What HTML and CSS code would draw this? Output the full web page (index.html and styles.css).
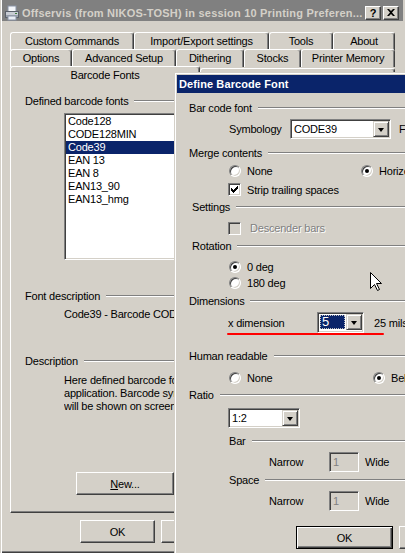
FILE: index.html
```html
<!DOCTYPE html>
<html>
<head>
<meta charset="utf-8">
<title>Printing Preferences</title>
<link rel="stylesheet" href="styles.css">
</head>
<body>
<div class="win">
  <div class="titlebar">
    <svg class="ticon" width="16" height="16" viewBox="0 0 16 16">
      <rect x="4" y="1" width="8" height="6" fill="#f4f6fa" stroke="#8a94a6" stroke-width="1"/>
      <rect x="1.5" y="6.5" width="13" height="6" fill="#c8ccd4" stroke="#5a606a" stroke-width="1"/>
      <rect x="2" y="10" width="12" height="2" fill="#9aa0aa"/>
      <rect x="4" y="11" width="8" height="4" fill="#e8ecf4" stroke="#8a94a6" stroke-width="1"/>
      <rect x="11" y="8" width="2" height="1" fill="#3a7a3a"/>
    </svg>
    <span class="ttext">Offservis (from NIKOS-TOSH) in session 10 Printing Preferen...</span>
    <span class="tbtn q">?</span>
    <span class="tbtn">
      <svg width="8" height="7" viewBox="0 0 8 7"><path d="M0 0h2l2 2 2-2h2L5 3.5 8 7H6L4 5 2 7H0l3-3.5z" fill="#000"/></svg>
    </span>
  </div>

  <div class="tabs">
    <div class="trow r1">
      <div class="tab">Custom Commands</div>
      <div class="tab">Import/Export settings</div>
      <div class="tab">Tools</div>
      <div class="tab">About</div>
    </div>
    <div class="trow r2">
      <div class="tab">Options</div>
      <div class="tab">Advanced Setup</div>
      <div class="tab">Dithering</div>
      <div class="tab">Stocks</div>
      <div class="tab">Printer Memory</div>
    </div>
    <div class="r3">
      <div class="tab sel">Barcode Fonts</div>
      <div class="tab other"></div>
    </div>
  </div>

  <div class="panel">
    <div class="hdr p-h1"><span>Defined barcode fonts</span><span class="ln"></span></div>
    <div class="listbox">
      <div class="item">Code128</div>
      <div class="item">CODE128MIN</div>
      <div class="item selitem">Code39</div>
      <div class="item">EAN 13</div>
      <div class="item">EAN 8</div>
      <div class="item">EAN13_90</div>
      <div class="item">EAN13_hmg</div>
    </div>
    <div class="hdr p-h2"><span>Font description</span><span class="ln"></span></div>
    <div class="ptext p-fd">Code39 - Barcode CODE39</div>
    <div class="hdr p-h3"><span>Description</span><span class="ln"></span></div>
    <div class="ptext p-desc">Here defined barcode fonts can be used in any<br>application. Barcode symbology and parameters<br>will be shown on screen in font description.</div>
    <div class="btn p-new"><u>N</u>ew...</div>
  </div>

  <div class="btns">
    <div class="btn">OK</div>
    <div class="btn">Cancel</div>
  </div>
</div>

<div class="dlg">
  <div class="dtitle">Define Barcode Font</div>
  <div class="dbody">
    <div class="hdr d-a"><span>Bar code font</span><span class="ln"></span></div>
    <div class="row d-b">
      <span class="lbl l-sym">Symbology</span>
      <div class="combo c-sym"><span class="val">CODE39</span><span class="dd"><i></i></span></div>
      <span class="after">Font</span>
    </div>
    <div class="hdr d-c"><span>Merge contents</span><span class="ln"></span></div>
    <div class="row d-d">
      <span class="opt o-merge"><span class="radio"></span>None</span>
      <span class="opt"><span class="radio on"></span>Horizontal</span>
    </div>
    <div class="row d-e">
      <span class="opt"><span class="check"><svg width="7" height="7" viewBox="0 0 7 7"><path d="M0 2h1v1h1v1h1V3h1V2h1V1h1V0h1v3H6v1H5v1H4v1H3v1H2V6H1V5H0z" fill="#000"/></svg></span>Strip trailing spaces</span>
    </div>
    <div class="hdr d-f ind"><span>Settings</span><span class="ln"></span></div>
    <div class="row d-g">
      <span class="opt dis"><span class="check off"></span>Descender bars</span>
    </div>
    <div class="hdr d-h ind"><span>Rotation</span><span class="ln"></span></div>
    <div class="row d-i"><span class="opt"><span class="radio on"></span>0 deg</span></div>
    <div class="row d-j"><span class="opt"><span class="radio"></span>180 deg</span></div>
    <div class="hdr d-k"><span>Dimensions</span><span class="ln"></span></div>
    <div class="row d-l">
      <span class="lbl l-xd">x dimension</span>
      <div class="combo c-xd"><span class="val"><span class="hl">5</span></span><span class="dd"><i></i></span></div>
      <span class="after a-mils">25 mils</span>
    </div>
    <div class="redline"></div>
    <div class="hdr d-m"><span>Human readable</span><span class="ln"></span></div>
    <div class="row d-n">
      <span class="opt o-hr"><span class="radio"></span>None</span>
      <span class="opt"><span class="radio on"></span>Below</span>
    </div>
    <div class="hdr d-o"><span>Ratio</span><span class="ln"></span></div>
    <div class="row d-p">
      <div class="combo c-ratio"><span class="val">1:2</span><span class="dd"><i></i></span></div>
    </div>
    <div class="hdr d-q sub"><span>Bar</span><span class="ln"></span></div>
    <div class="row d-r">
      <span class="lbl l-nar">Narrow</span>
      <span class="tbox">1</span>
      <span class="after a-wide">Wide</span>
    </div>
    <div class="hdr d-s sub"><span>Space</span><span class="ln"></span></div>
    <div class="row d-t">
      <span class="lbl l-nar">Narrow</span>
      <span class="tbox">1</span>
      <span class="after a-wide">Wide</span>
    </div>
    <div class="row d-u">
      <div class="btn def">OK</div>
      <div class="btn def2">Cancel</div>
    </div>
  </div>
  <svg class="cursor" width="13" height="20" viewBox="0 0 13 20">
    <path d="M0.5 0.5 L0.5 16.5 L4.5 12.5 L7.5 18.5 L9.5 17.5 L6.5 11.5 L11.5 11.5 Z" fill="#fff" stroke="#000" stroke-width="1"/>
  </svg>
</div>
</body>
</html>
```

FILE: styles.css
```css
* { box-sizing: border-box; }
html, body { margin: 0; padding: 0; }
body {
  width: 405px;
  height: 553px;
  overflow: hidden;
  position: relative;
  background: #d4d0c8;
  font-family: "Liberation Sans", Arial, sans-serif;
  font-size: 11px;
  letter-spacing: -0.2px;
  color: #000;
}

/* main window */
.win {
  height: 553px;
  border-left: 1px solid #d4d0c8;
  padding-left: 1px;
  box-shadow: inset 1px 0 #fff, inset 0 -1px #404040, inset 0 -2px #808080;
  display: flex;
  flex-direction: column;
}
.titlebar {
  height: 21px;
  margin-right: 2px;
  background: #808080;
  color: #d4d0c8;
  font-weight: bold;
  display: flex;
  align-items: center;
  padding: 4px 4px 0 2px;
  white-space: nowrap;
}
.ticon { flex: none; margin-right: 2px; }
.ttext { flex: 1; overflow: hidden; letter-spacing: 0.2px; }
.tbtn {
  flex: none;
  width: 16px;
  height: 14px;
  margin-left: 1px;
  background: #d4d0c8;
  border: 1px solid;
  border-color: #fff #404040 #404040 #fff;
  box-shadow: inset -1px -1px #808080;
  display: flex;
  align-items: center;
  justify-content: center;
  color: #000;
  font-weight: bold;
  font-size: 11px;
  line-height: 12px;
  letter-spacing: 0;
}
.tbtn.q { margin-right: 1px; }

/* tabs */
.tabs { margin: 11px 0 0 8px; width: 385px; }
.trow { display: grid; height: 17px; }
.r1 { grid-template-columns: 124px 135px 64px 62px; }
.r2 { grid-template-columns: 62px 104px 68px 57px 94px; }
.tab {
  height: 18px;
  background: #d4d0c8;
  border-top: 1px solid #fff;
  border-left: 1px solid #fff;
  border-right: 1px solid #404040;
  box-shadow: inset -1px 0 #808080;
  border-radius: 3px 3px 0 0;
  text-align: center;
  line-height: 16px;
  white-space: nowrap;
  overflow: hidden;
}
.r3 { display: flex; align-items: flex-end; height: 19px; }
.tab.sel { width: 190px; height: 20px; margin-bottom: -1px; position: relative; z-index: 1; }
.tab.other { width: 195px; height: 17px; }

.panel {
  margin-left: 8px;
  width: 385px;
  height: 428px;
  border-top: 1px solid #fff;
  border-left: 1px solid #fff;
  border-right: 1px solid #404040;
  border-bottom: 1px solid #404040;
  box-shadow: inset -1px -1px #808080;
  display: flex;
  flex-direction: column;
}

/* group headers */
.hdr { display: flex; align-items: center; height: 14px; white-space: nowrap; }
.ln { flex: 1; height: 2px; border-top: 1px solid #808080; border-bottom: 1px solid #fff; margin-left: 6px; }
.p-h1 { margin: 8px 0 0 14px; }
.p-h2 { margin: 29px 0 0 14px; }
.p-h3 { margin: 33px 0 0 14px; }

.listbox {
  margin: 5px 0 0 53px;
  width: 240px;
  height: 147px;
  background: #fff;
  border: 1px solid;
  border-color: #808080 #fff #fff #808080;
  box-shadow: inset 1px 1px #404040, inset -1px -1px #d4d0c8;
  padding: 1px;
}
.item { height: 13px; line-height: 13px; padding-left: 2px; white-space: nowrap; }
.selitem { background: #0a246a; color: #fff; }

.ptext { margin-left: 53px; width: 110px; overflow: hidden; line-height: 13px; white-space: nowrap; }
.p-fd { margin-top: 5px; }
.p-desc { margin-top: 6px; }

.btn {
  flex: none;
  height: 23px;
  background: #d4d0c8;
  border: 1px solid;
  border-color: #fff #404040 #404040 #fff;
  box-shadow: inset -1px -1px #808080;
  display: flex;
  align-items: center;
  justify-content: center;
  white-space: nowrap;
}
.p-new { margin: 59px 0 0 65px; width: 98px; }
.btns { display: flex; gap: 6px; margin: 7px 0 0 78px; }
.btns .btn { width: 75px; }

/* dialog */
.dlg {
  position: absolute;
  z-index: 5;
  left: 174px;
  top: 72px;
  width: 260px;
  height: 481px;
  background: #d4d0c8;
  border-left: 1px solid #d4d0c8;
  border-top: 1px solid #d4d0c8;
  box-shadow: inset 1px 1px #fff;
  padding: 2px 0 0 2px;
}
.dtitle {
  height: 18px;
  line-height: 18px;
  background: #0a246a;
  color: #fff;
  font-weight: bold;
  padding-left: 2px;
  white-space: nowrap;
  letter-spacing: 0.1px;
}
.dbody { display: flex; flex-direction: column; }
.dbody .hdr { margin-left: 12px; }
.dbody .hdr.ind { margin-left: 15px; }
.dbody .hdr.sub { margin-left: 52px; }
.row { display: flex; align-items: center; white-space: nowrap; margin-left: 52px; }
.row > * { flex: none; }

.d-a { margin-top: 8px; }
.d-b { margin-top: 4px; height: 20px; }
.d-c { margin-top: 7px; }
.d-d { margin-top: 4px; height: 14px; }
.d-e { margin-top: 5px; height: 13px; margin-left: 51px; }
.d-f { margin-top: 4px; }
.d-g { margin-top: 7px; height: 14px; margin-left: 51px; }
.d-h { margin-top: 4px; }
.d-i { margin-top: 7px; height: 14px; }
.d-j { margin-top: 2px; height: 14px; }
.d-k { margin-top: 4px; }
.d-l { margin-top: 4px; height: 21px; margin-left: 51px; }
.d-m { margin-top: 14px; }
.d-n { margin-top: 8px; height: 14px; }
.d-o { margin-top: 3px; }
.d-p { margin-top: 6px; height: 20px; margin-left: 51px; }
.d-q { margin-top: 6px; }
.d-r { margin-top: 4px; height: 20px; margin-left: 92px; }
.d-s { margin-top: 1px; }
.d-t { margin-top: 4px; height: 20px; margin-left: 92px; }
.d-u { margin-top: 15px; height: 23px; margin-left: 119px; gap: 6px; }

.lbl { flex: none; }
.l-sym { width: 61px; }
.l-xd { width: 89px; }
.l-nar { width: 60px; }
.after { margin-left: 8px; }
.a-mils { margin-left: 10px; }
.a-wide { margin-left: 6px; }

.opt { display: flex; align-items: center; }
.o-merge { width: 132px; }
.o-hr { width: 144px; }
.opt.dis { color: #808080; text-shadow: 1px 1px #fff; }

.radio {
  flex: none;
  width: 12px;
  height: 12px;
  margin-right: 6px;
  border-radius: 50%;
  background: #fff;
  border: 1px solid;
  border-color: #808080 #fff #fff #808080;
  box-shadow: inset 1px 1px #404040, inset -1px -1px #d4d0c8;
  position: relative;
}
.radio.on::after {
  content: "";
  position: absolute;
  left: 3px;
  top: 3px;
  width: 4px;
  height: 4px;
  border-radius: 50%;
  background: #000;
}
.check {
  flex: none;
  width: 13px;
  height: 13px;
  margin-right: 6px;
  background: #fff;
  border: 1px solid;
  border-color: #808080 #fff #fff #808080;
  box-shadow: inset 1px 1px #404040, inset -1px -1px #d4d0c8;
  display: flex;
  align-items: center;
  justify-content: center;
}
.check.off { background: #d4d0c8; margin-right: 9px; }

.combo {
  flex: none;
  display: flex;
  height: 20px;
  padding: 1px;
  background: #fff;
  border: 1px solid;
  border-color: #808080 #fff #fff #808080;
  box-shadow: inset 1px 1px #404040, inset -1px -1px #d4d0c8;
}
.combo .val { flex: 1; padding-left: 2px; line-height: 16px; white-space: nowrap; overflow: hidden; }
.dd {
  flex: none;
  width: 16px;
  height: 16px;
  background: #d4d0c8;
  border: 1px solid;
  border-color: #d4d0c8 #404040 #404040 #d4d0c8;
  box-shadow: inset 1px 1px #fff, inset -1px -1px #808080;
  display: flex;
  align-items: center;
  justify-content: center;
}
.dd i {
  display: block;
  width: 0;
  height: 0;
  border-left: 3.5px solid transparent;
  border-right: 3.5px solid transparent;
  border-top: 4px solid #000;
  margin-top: 1px;
}
.c-sym { width: 101px; }
.c-xd { width: 47px; height: 21px; }
.c-xd .val { padding: 1px; }
.hl {
  display: block;
  height: 14px;
  line-height: 13px;
  background: #0a246a;
  color: #fff;
  padding-left: 2px;
  outline: 1px dotted #c0c0c0;
  outline-offset: -1px;
  font-size: 13px;
}
.c-ratio { width: 72px; }

.tbox {
  flex: none;
  width: 30px;
  height: 20px;
  background: #d4d0c8;
  color: #808080;
  border: 1px solid;
  border-color: #808080 #fff #fff #808080;
  box-shadow: inset 1px 1px #404040, inset -1px -1px #d4d0c8;
  padding-left: 3px;
  line-height: 18px;
}

.redline {
  margin-left: 50px;
  width: 157px;
  height: 2px;
  background: #ff0000;
  border-radius: 1px;
}

.btn.def { width: 97px; border: 1px solid #000; box-shadow: inset 1px 1px #fff, inset -1px -1px #404040, inset -2px -2px #808080; }
.btn.def2 { width: 75px; }

.cursor { position: absolute; left: 195px; top: 199px; }
```
